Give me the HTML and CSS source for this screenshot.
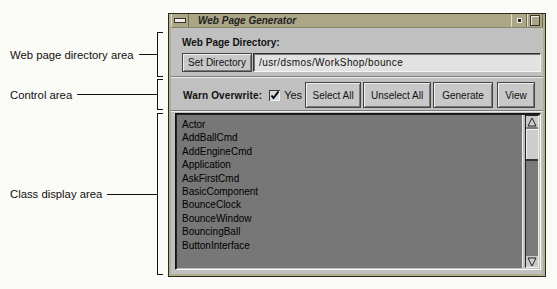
FILE: index.html
```html
<!DOCTYPE html>
<html>
	<head>
		<meta charset="UTF-8">
		<title>Web Page Generator</title>
		<link rel="stylesheet" href="styles.css">
	</head>
	<body>
		<div class="page">
			<!-- callouts on the left -->
			<div class="notes">
				<div class="note note-dir">
					<span class="note-text">Web page directory area</span>
					<span class="note-line"></span>
					<span class="brace"></span>
				</div>
				<div class="note note-ctrl">
					<span class="note-text">Control area</span>
					<span class="note-line"></span>
					<span class="brace"></span>
				</div>
				<div class="note note-class">
					<span class="note-text">Class display area</span>
					<span class="note-line"></span>
					<span class="brace"></span>
				</div>
			</div>

			<div class="window">
				<div class="titlebar">
					<span class="tb-btn tb-menu"><span class="menu-bar"></span></span>
					<span class="title">Web Page Generator</span>
					<span class="tb-btn tb-min"><span class="dot"></span></span>
					<span class="tb-btn tb-max"><span class="square"></span></span>
				</div>
				<div class="body">
					<div class="dir">
						<div class="label">Web Page Directory:</div>
						<div class="dir-row">
							<div class="btn btn-dir">Set Directory</div>
							<div class="field">/usr/dsmos/WorkShop/bounce</div>
						</div>
					</div>
					<div class="sep"></div>
					<div class="controls">
						<span class="label">Warn Overwrite:</span>
						<span class="check">
							<svg width="11" height="11" viewBox="0 0 11 11">
								<rect x="0" y="0" width="11" height="11" fill="#3a3a3a"/>
								<rect x="1" y="1" width="10" height="10" fill="#f2f2f2"/>
								<rect x="1" y="1" width="9" height="9" fill="#d8d8d8"/>
								<path d="M2.5 5.5 L4.5 8 L9.5 1.5" stroke="#000" stroke-width="2" fill="none"/>
							</svg>
							Yes
						</span>
						<div class="btn btn-sel">Select All</div>
						<div class="btn btn-unsel">Unselect All</div>
						<div class="btn btn-gen">Generate</div>
						<div class="btn btn-view">View</div>
					</div>
					<div class="sep"></div>
					<div class="list-frame">
						<ul class="list">
							<li>Actor</li>
							<li>AddBallCmd</li>
							<li>AddEngineCmd</li>
							<li>Application</li>
							<li>AskFirstCmd</li>
							<li>BasicComponent</li>
							<li>BounceClock</li>
							<li>BounceWindow</li>
							<li>BouncingBall</li>
							<li>ButtonInterface</li>
						</ul>
						<div class="scrollbar">
							<div class="arrow">
								<svg width="10" height="10" viewBox="0 0 10 10"><path d="M5 1 L9 9 L1 9 Z" fill="#cfcfcf" stroke="#222" stroke-width="1"/></svg>
							</div>
							<div class="thumb"></div>
							<div class="track"></div>
							<div class="arrow">
								<svg width="10" height="10" viewBox="0 0 10 10"><path d="M1 1 L9 1 L5 9 Z" fill="#cfcfcf" stroke="#222" stroke-width="1"/></svg>
							</div>
						</div>
					</div>
				</div>
			</div>
		</div>
	</body>
</html>
```

FILE: styles.css
```css
body{
	margin: 0;
	background-color: #fafaf7;
	font-family: "Liberation Sans", Arial, sans-serif;
	color: #111;
}
.page{
	display: flex;
	align-items: flex-start;
	width: 557px;
	height: 289px;
	padding-top: 13px;
	box-sizing: border-box;
}
/* callouts */
.notes{
	width: 168px;
	margin-top: 19px;
	padding-left: 10px;
	box-sizing: border-box;
	display: flex;
	flex-direction: column;
}
.note{
	display: flex;
	align-items: center;
}
.note-dir{height: 45px;}
.note-ctrl{height: 31px; margin-top: 2px;}
.note-class{height: 162px; margin-top: 3px;}
.note-text{
	font-size: 11.3px;
	padding-right: 5px;
	white-space: nowrap;
}
.note-line{
	flex: 1;
	border-top: 1px solid #111;
}
.brace{
	width: 5px;
	align-self: stretch;
	border: 1px solid #111;
	border-right: none;
	margin-right: 5px;
}
/* window */
.window{
	width: 378px;
	height: 264px;
	box-sizing: border-box;
	border: 1px solid #2b2a1e;
	background: #b3ae8f;
	padding: 0 2px 2px 2px;
	display: flex;
	flex-direction: column;
}
.titlebar{
	height: 14px;
	display: flex;
	align-items: stretch;
	background: #aba686;
	border-bottom: 1px solid #8a8668;
	box-sizing: border-box;
}
.tb-btn{
	display: flex;
	align-items: center;
	justify-content: center;
	border-left: 1px solid #e0ddc8;
	border-right: 1px solid #6f6b52;
}
.tb-menu{width: 16px;}
.menu-bar{
	width: 10px;
	height: 3px;
	background: #f0eee0;
	border: 1px solid #333;
}
.title{
	flex: 1;
	font-size: 10px;
	font-weight: bold;
	font-style: italic;
	line-height: 13px;
	padding-left: 9px;
	color: #222;
}
.tb-min{width: 14px;}
.dot{
	width: 3px;
	height: 3px;
	background: #222;
	border: 1px solid #eee;
}
.tb-max{width: 14px;}
.square{
	width: 8px;
	height: 9px;
	border: 1px solid #333;
	box-shadow: inset 1px 1px 0 #eee;
}
.body{
	flex: 1;
	background: #c0c0c0;
	display: flex;
	flex-direction: column;
	padding-bottom: 4px;
	font-size: 10px;
}
.label{
	font-weight: bold;
	font-size: 10px;
	white-space: nowrap;
}
.dir{
	padding: 8px 2px 4px 11px;
}
.dir .label{
	line-height: 13px;
	margin-bottom: 4px;
}
.dir-row{
	display: flex;
	gap: 1px;
	height: 19px;
}
.btn{
	display: flex;
	align-items: center;
	justify-content: center;
	flex-shrink: 0;
	box-sizing: border-box;
	background: #c8c8c8;
	border: 1px solid #444;
	box-shadow: inset 1px 1px 0 #eee, inset -1px -1px 0 #7a7a7a;
	font-size: 10px;
	white-space: nowrap;
}
.btn-dir{width: 70px;}
.field{
	flex: 1;
	background: #e2e2e2;
	border: 1px solid;
	border-color: #333 #f4f4f4 #f4f4f4 #333;
	box-shadow: inset 1px 1px 0 #777;
	padding-left: 5px;
	line-height: 17px;
	letter-spacing: 0.4px;
}
.sep{
	height: 2px;
	box-sizing: border-box;
	border-top: 1px solid #7c7c7c;
	border-bottom: 1px solid #eeeeee;
}
.controls{
	display: flex;
	align-items: center;
	padding: 4px 8px 2px 12px;
	height: 26px;
}
.controls .label{
	margin-right: 7px;
	letter-spacing: 0.15px;
}
.check{
	display: flex;
	align-items: center;
	gap: 4px;
	font-size: 11px;
	margin-right: 3px;
	white-space: nowrap;
}
.controls .btn{
	height: 26px;
	margin-right: 2px;
}
.btn-sel{width: 56px;}
.btn-unsel{width: 68px;}
.btn-gen{width: 60px;}
.btn-view{width: 38px; margin-left: 2px;}
.list-frame{
	flex: 1;
	margin: 1px 2px 0 4px;
	display: flex;
	gap: 2px;
	padding: 1px;
	border: 1px solid;
	border-color: #111 #fafafa #fafafa #111;
	box-shadow: inset 1px 1px 0 #222;
	background: #c0c0c0;
}
.list{
	flex: 1;
	margin: 0;
	padding: 3px 0 0 5px;
	list-style: none;
	background: #777777;
	border-right: 1px solid #eee;
	font-size: 10px;
	line-height: 13.4px;
	color: #000;
}
.scrollbar{
	width: 12px;
	display: flex;
	flex-direction: column;
	background: #7a7a7a;
	border: 1px solid;
	border-color: #222 #f0f0f0 #f0f0f0 #222;
}
.arrow{
	height: 11px;
	display: flex;
	align-items: center;
	justify-content: center;
	background: #c8c8c8;
}
.thumb{
	height: 30px;
	margin-top: 2px;
	background: #cdcdcd;
	border-bottom: 2px solid #333;
	box-shadow: inset 1px 1px 0 #f2f2f2;
}
.track{
	flex: 1;
}
```
